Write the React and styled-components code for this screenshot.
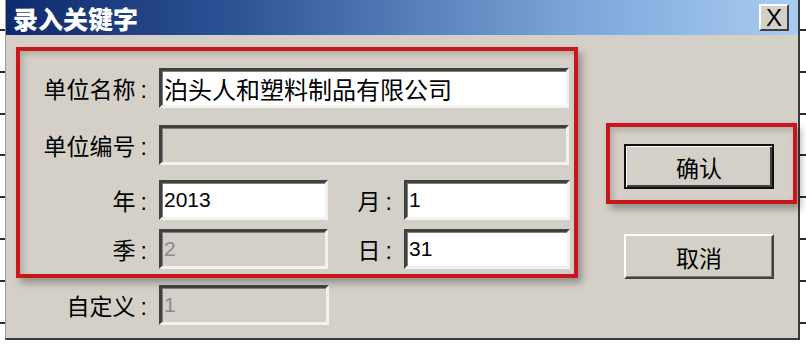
import React from "react";
import styled, { createGlobalStyle } from "styled-components";

const GlobalStyle = createGlobalStyle`
  html, body {
    margin: 0;
    padding: 0;
    background: #ffffff;
  }
  body {
    font-family: "Liberation Sans", "Noto Sans CJK SC", sans-serif;
    color: #000;
  }
`;

const Screen = styled.div`
  width: 806px;
  height: 344px;
  box-sizing: border-box;
  padding-left: 5px;
  overflow: hidden;
  background: repeating-linear-gradient(
    to bottom,
    transparent 0,
    transparent 29px,
    #2a2a2a 29px,
    #2a2a2a 31px,
    transparent 31px,
    transparent 41.8px
  );
`;

const Dialog = styled.div`
  width: 795px;
  height: 340px;
  box-sizing: border-box;
  display: flex;
  flex-direction: column;
  background: #d4d0c8;
  border-left: 1px solid #9a9a9a;
  border-right: 2px solid #3a3a3a;
  border-bottom: 2px solid #3a3a3a;
`;

const TitleBar = styled.div`
  height: 35px;
  flex: none;
  display: flex;
  align-items: center;
  justify-content: space-between;
  padding: 0 9px 0 7px;
  background: linear-gradient(to right, #0e2a6e 0%, #2f5597 30%, #7aa2d6 70%, #a8cdf2 100%);
`;

const Title = styled.span`
  color: #fff;
  font-size: 25px;
  font-weight: 900;
  font-family: "Noto Sans CJK SC", sans-serif;
`;

const CloseButton = styled.div`
  width: 30px;
  height: 27px;
  box-sizing: border-box;
  display: flex;
  align-items: center;
  justify-content: center;
  background: #d4d0c8;
  border: 2px solid;
  border-color: #ffffff #404040 #404040 #ffffff;
  font-family: "Liberation Sans", sans-serif;
  font-size: 24px;
  font-weight: 400;
  line-height: 1;
`;

const Body = styled.div`
  flex: 1;
  display: flex;
  align-items: flex-start;
  padding: 12px 0 0 10px;
`;

const FormColumn = styled.div`
  display: flex;
  flex-direction: column;
`;

const Highlight = styled.div`
  border: 4px solid #c8161d;
  padding: ${(p) => p.$pad || "0"};
  box-shadow: 4px 5px 7px rgba(0, 0, 0, 0.3), inset 3px 3px 6px rgba(0, 0, 0, 0.18);
`;

const FieldFrame = styled(Highlight)`
  width: 554px;
  padding-bottom: 5px;
`;

const Row = styled.div`
  display: flex;
  align-items: center;
  height: 40px;
  margin-top: ${(p) => p.$top}px;
  padding-left: ${(p) => p.$indent || 0}px;
`;

const Label = styled.div`
  width: ${(p) => p.$w || 127}px;
  box-sizing: border-box;
  padding-right: ${(p) => p.$pr || 0}px;
  margin-right: ${(p) => p.$mr ?? 12}px;
  text-align: right;
  font-family: "Noto Sans CJK SC", sans-serif;
  font-size: 23px;
  white-space: nowrap;
`;

const Colon = styled.span`
  margin-left: 5px;
  font-family: "Liberation Sans", sans-serif;
`;

const Field = styled.div`
  width: ${(p) => p.$w}px;
  height: 40px;
  box-sizing: border-box;
  display: flex;
  align-items: center;
  padding-left: 2px;
  background: ${(p) => (p.$disabled ? "#d4d0c8" : "#ffffff")};
  color: ${(p) => (p.$disabled ? "#8a8a8a" : "#000")};
  border: 3px solid;
  border-color: #404040 #f2f2f2 #f2f2f2 #404040;
  box-shadow: inset 1px 1px 0 #808080;
  font-size: ${(p) => (p.$cjk ? 24 : 21)}px;
  white-space: nowrap;
  overflow: hidden;
`;

const ButtonColumn = styled.div`
  display: flex;
  flex-direction: column;
  align-items: flex-start;
  margin-left: 28px;
  padding-top: 76px;
`;

const Button = styled.div`
  width: 150px;
  height: 45px;
  box-sizing: border-box;
  display: flex;
  align-items: center;
  justify-content: center;
  margin: ${(p) => p.$margin || "0"};
  background: #d4d0c8;
  border: 2px solid;
  border-color: ${(p) => (p.$default ? "#111 #111 #111 #111" : "#ffffff #404040 #404040 #ffffff")};
  box-shadow: ${(p) =>
    p.$default
      ? "inset 1px 1px 0 #ffffff, inset -2px -2px 0 #404040"
      : "inset -1px -1px 0 #808080"};
  font-family: "Noto Sans CJK SC", sans-serif;
  font-size: 23px;
`;

function LabelText({ children }) {
  return (
    <>
      {children}
      <Colon>:</Colon>
    </>
  );
}

export default function App() {
  return (
    <>
      <GlobalStyle />
      <Screen>
        <Dialog>
          <TitleBar>
            <Title>录入关键字</Title>
            <CloseButton>X</CloseButton>
          </TitleBar>
          <Body>
            <FormColumn>
              <FieldFrame>
                <Row $top={17}>
                  <Label><LabelText>单位名称</LabelText></Label>
                  <Field $w={410} $cjk>泊头人和塑料制品有限公司</Field>
                </Row>
                <Row $top={17}>
                  <Label><LabelText>单位编号</LabelText></Label>
                  <Field $w={410} $disabled />
                </Row>
                <Row $top={15}>
                  <Label><LabelText>年</LabelText></Label>
                  <Field $w={169}>2013</Field>
                  <Label $w={76} $pr={12} $mr={0}><LabelText>月</LabelText></Label>
                  <Field $w={166}>1</Field>
                </Row>
                <Row $top={9}>
                  <Label><LabelText>季</LabelText></Label>
                  <Field $w={169} $disabled>2</Field>
                  <Label $w={76} $pr={12} $mr={0}><LabelText>日</LabelText></Label>
                  <Field $w={166}>31</Field>
                </Row>
              </FieldFrame>
              <Row $top={7} $indent={4}>
                <Label><LabelText>自定义</LabelText></Label>
                <Field $w={170} $disabled>1</Field>
              </Row>
            </FormColumn>
            <ButtonColumn>
              <Highlight $pad="17px 19px 11px 14px">
                <Button $default>确认</Button>
              </Highlight>
              <Button $margin="30px 0 0 18px">取消</Button>
            </ButtonColumn>
          </Body>
        </Dialog>
      </Screen>
    </>
  );
}
